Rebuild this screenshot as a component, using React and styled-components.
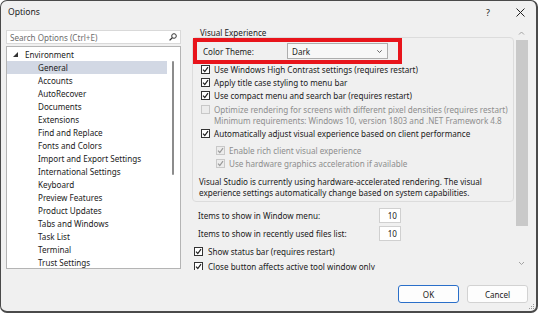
import React from 'react';
import styled, { createGlobalStyle } from 'styled-components';

const GlobalStyle = createGlobalStyle`
  html, body {
    margin: 0;
    padding: 0;
    background: #ffffff;
  }
  body {
    font-family: "Segoe UI", "Noto Sans", sans-serif;
  }
`;

const Window = styled.div`
  position: relative;
  box-sizing: border-box;
  width: 538px;
  height: 313px;
  background: #f0f0f0;
  border: 1px solid #4a4a4a;
  border-right-width: 2px;
  border-bottom-width: 2px;
  border-radius: 7px;
  overflow: hidden;
  display: flex;
  flex-direction: column;
  color: #1b1b1b;
  font-size: 8.1px;
`;

const TitleBar = styled.div`
  height: 26px;
  flex-shrink: 0;
  display: flex;
  align-items: center;
  padding: 0 0 4px 7px;
  box-sizing: border-box;
`;

const Title = styled.div`
  flex: 1;
  font-size: 8.6px;
`;

const TitleButton = styled.div`
  width: 32px;
  height: 20px;
  display: flex;
  align-items: center;
  justify-content: center;
  font-size: 9px;
  color: #222;
`;

const Body = styled.div`
  height: 243px;
  display: flex;
  flex-shrink: 0;
`;

const LeftColumn = styled.div`
  width: 175px;
  margin: 3px 0 0 5px;
  display: flex;
  flex-direction: column;
  gap: 2px;
`;

const SearchBox = styled.div`
  box-sizing: border-box;
  height: 14px;
  background: #fff;
  border: 1px solid #d9d9d9;
  display: flex;
  align-items: center;
  padding: 0 3px 0 3px;
  color: #6e6e6e;
`;

const SearchText = styled.span`
  flex: 1;
`;

const Tree = styled.div`
  box-sizing: border-box;
  height: 223px;
  background: #fff;
  border: 1px solid #b4b4b4;
  display: flex;
  padding-top: 1px;
`;

const TreeList = styled.div`
  width: 160px;
`;

const TreeRow = styled.div`
  height: 13px;
  display: flex;
  align-items: center;
  padding-left: ${p => p.$level === 0 ? 6 : 31}px;
  background: ${p => p.$selected ? '#d2d8e4' : 'transparent'};
  white-space: nowrap;
`;

const Expander = styled.svg`
  width: 5px;
  height: 5px;
  margin-right: 7px;
`;

const TreeScroll = styled.div`
  flex: 1;
  padding: 13px 0 0 5px;
`;

const ThinThumb = styled.div`
  width: 2px;
  height: 114px;
  background: #8c8c8c;
  border-radius: 1px;
`;

const RightPane = styled.div`
  width: 336px;
  margin-left: 11px;
  display: flex;
`;

const Content = styled.div`
  flex: 1;
  overflow: hidden;
`;

const SectionLabel = styled.div`
  height: 10px;
  line-height: 11px;
  padding-left: 8px;
`;

const GroupBox = styled.div`
  width: 322px;
  box-sizing: border-box;
  border: 1px solid #dcdcdc;
  border-radius: 4px;
  padding-bottom: 3px;
`;

const ThemeRow = styled.div`
  box-sizing: border-box;
  width: 209px;
  height: 26px;
  border: 4px solid #e8141b;
  display: flex;
  align-items: center;
  margin-bottom: -1px;
`;

const ThemeLabel = styled.span`
  width: 84px;
  padding-left: 6px;
`;

const Dropdown = styled.div`
  box-sizing: border-box;
  width: 101px;
  height: 16px;
  border: 1px solid #adadad;
  background: #f7f7f7;
  display: flex;
  align-items: center;
  justify-content: space-between;
  padding: 0 5px 0 4px;
`;

const CheckRow = styled.div`
  display: flex;
  align-items: flex-start;
  margin-top: ${p => p.$mt || 0}px;
  padding-left: ${p => p.$indent}px;
  color: ${p => p.$disabled ? '#8e8e8e' : '#1b1b1b'};
  line-height: ${p => p.$lh || 13}px;
  white-space: nowrap;
`;

const Box = styled.span`
  box-sizing: border-box;
  flex-shrink: 0;
  width: 9px;
  height: 9px;
  margin-top: ${p => p.$top}px;
  margin-right: ${p => p.$gap}px;
  border: 1px solid ${p => p.$disabled ? '#c8c8c8' : '#333'};
  background: ${p => p.$disabled ? '#ececec' : '#fff'};
  display: flex;
  align-items: center;
  justify-content: center;
`;

const Note = styled.div`
  margin-top: 6px;
  padding-left: 6px;
  line-height: 11px;
  white-space: nowrap;
`;

const NumberRow = styled.div`
  display: flex;
  align-items: center;
  height: 15px;
  margin-top: ${p => p.$mt}px;
  padding-left: 6px;
`;

const NumberLabel = styled.span`
  width: 181px;
`;

const NumberInput = styled.div`
  box-sizing: border-box;
  width: 22px;
  height: 15px;
  background: #fff;
  border: 1px solid #d0d0d0;
  text-align: right;
  padding-right: 3px;
  line-height: 13px;
`;

const VScroll = styled.div`
  width: 13px;
  display: flex;
  flex-direction: column;
  align-items: center;
  padding-bottom: 1px;
`;

const Arrow = styled.svg`
  width: 7px;
  height: 12px;
  flex-shrink: 0;
`;

const Thumb = styled.div`
  width: 12px;
  height: 186px;
  margin-top: 1px;
  background: #c9c9c9;
`;

const Spacer = styled.div`
  flex: 1;
`;

const Footer = styled.div`
  flex: 1;
  display: flex;
  justify-content: flex-end;
  align-items: flex-start;
  gap: 8px;
  padding: 15px 8px 0 0;
`;

const Button = styled.div`
  box-sizing: border-box;
  width: 61px;
  height: 18px;
  border-radius: 3px;
  background: #fdfdfd;
  border: 1px solid ${p => p.$primary ? '#2a6fc9' : '#d2d2d2'};
  display: flex;
  align-items: center;
  justify-content: center;
`;

const Grip = styled.svg`
  position: absolute;
  right: 1px;
  bottom: 1px;
  width: 7px;
  height: 7px;
`;

const Check = ({ color }) => (
  <svg width="7" height="7" viewBox="0 0 7 7">
    <path d="M1 3.6 L2.8 5.5 L6 1.2" fill="none" stroke={color} strokeWidth="1.2" />
  </svg>
);

const CheckBox = ({ checked = true, disabled, gap = 5, top = 2 }) => (
  <Box $disabled={disabled} $gap={gap} $top={top}>
    {checked && <Check color={disabled ? '#9a9a9a' : '#222'} />}
  </Box>
);

const treeItems = [
  'General', 'Accounts', 'AutoRecover', 'Documents', 'Extensions', 'Find and Replace',
  'Fonts and Colors', 'Import and Export Settings', 'International Settings', 'Keyboard',
  'Preview Features', 'Product Updates', 'Tabs and Windows', 'Task List', 'Terminal', 'Trust Settings',
];

export default function App() {
  return (
    <>
      <GlobalStyle />
      <Window>
        <TitleBar>
          <Title>Options</Title>
          <TitleButton>?</TitleButton>
          <TitleButton>
            <svg width="9" height="9" viewBox="0 0 9 9">
              <path d="M0.5 0.5 L8.5 8.5 M8.5 0.5 L0.5 8.5" stroke="#222" strokeWidth="1" />
            </svg>
          </TitleButton>
        </TitleBar>

        <Body>
          <LeftColumn>
            <SearchBox>
              <SearchText>Search Options (Ctrl+E)</SearchText>
              <svg width="8" height="8" viewBox="0 0 8 8">
                <circle cx="5" cy="3" r="2.3" fill="none" stroke="#333" strokeWidth="1" />
                <path d="M3.3 4.7 L0.6 7.4" stroke="#333" strokeWidth="1.3" />
              </svg>
            </SearchBox>
            <Tree>
              <TreeList>
                <TreeRow $level={0}>
                  <Expander viewBox="0 0 5 5">
                    <polygon points="5,0 5,5 0,5" fill="#333" />
                  </Expander>
                  Environment
                </TreeRow>
                {treeItems.map(item => (
                  <TreeRow key={item} $level={1} $selected={item === 'General'}>
                    {item}
                  </TreeRow>
                ))}
              </TreeList>
              <TreeScroll>
                <ThinThumb />
              </TreeScroll>
            </Tree>
          </LeftColumn>

          <RightPane>
            <Content>
              <SectionLabel>Visual Experience</SectionLabel>
              <GroupBox>
                <ThemeRow>
                  <ThemeLabel>Color Theme:</ThemeLabel>
                  <Dropdown>
                    <span>Dark</span>
                    <svg width="5" height="3" viewBox="0 0 5 3">
                      <path d="M0.3 0.3 L2.5 2.5 L4.7 0.3" fill="none" stroke="#555" strokeWidth="0.9" />
                    </svg>
                  </Dropdown>
                </ThemeRow>
                <CheckRow $indent={8}>
                  <CheckBox gap={4} />
                  Use Windows High Contrast settings (requires restart)
                </CheckRow>
                <CheckRow $indent={8}>
                  <CheckBox gap={4} />
                  Apply title case styling to menu bar
                </CheckRow>
                <CheckRow $indent={8}>
                  <CheckBox gap={4} />
                  Use compact menu and search bar (requires restart)
                </CheckRow>
                <CheckRow $indent={8} $mt={2} $lh={11} $disabled>
                  <CheckBox gap={4} top={1} checked={false} disabled />
                  <div>
                    Optimize rendering for screens with different pixel densities (requires restart)
                    <br />
                    Minimum requirements: Windows 10, version 1803 and .NET Framework 4.8
                  </div>
                </CheckRow>
                <CheckRow $indent={8} $mt={1}>
                  <CheckBox gap={4} />
                  Automatically adjust visual experience based on client performance
                </CheckRow>
                <CheckRow $indent={23} $mt={4} $disabled>
                  <CheckBox gap={4} disabled />
                  Enable rich client visual experience
                </CheckRow>
                <CheckRow $indent={23} $disabled>
                  <CheckBox gap={4} disabled />
                  Use hardware graphics acceleration if available
                </CheckRow>
                <Note>
                  Visual Studio is currently using hardware-accelerated rendering. The visual
                  <br />
                  experience settings automatically change based on system capabilities.
                </Note>
              </GroupBox>
              <NumberRow $mt={6}>
                <NumberLabel>Items to show in Window menu:</NumberLabel>
                <NumberInput>10</NumberInput>
              </NumberRow>
              <NumberRow $mt={3}>
                <NumberLabel>Items to show in recently used files list:</NumberLabel>
                <NumberInput>10</NumberInput>
              </NumberRow>
              <CheckRow $indent={2} $mt={4}>
                <CheckBox gap={5} />
                Show status bar (requires restart)
              </CheckRow>
              <CheckRow $indent={2} $mt={2}>
                <CheckBox gap={5} />
                Close button affects active tool window only
              </CheckRow>
            </Content>
            <VScroll>
              <Arrow viewBox="0 0 7 12">
                <path d="M1 7.5 L3.5 5 L6 7.5" fill="none" stroke="#9a9a9a" strokeWidth="0.9" />
              </Arrow>
              <Thumb />
              <Spacer />
              <Arrow viewBox="0 0 7 12">
                <path d="M1 5 L3.5 7.5 L6 5" fill="none" stroke="#9a9a9a" strokeWidth="0.9" />
              </Arrow>
            </VScroll>
          </RightPane>
        </Body>

        <Footer>
          <Button $primary>OK</Button>
          <Button>Cancel</Button>
        </Footer>

        <Grip viewBox="0 0 7 7">
          <rect x="5" y="1" width="1" height="1" fill="#999" />
          <rect x="3" y="3" width="1" height="1" fill="#999" />
          <rect x="5" y="3" width="1" height="1" fill="#999" />
          <rect x="1" y="5" width="1" height="1" fill="#999" />
          <rect x="3" y="5" width="1" height="1" fill="#999" />
          <rect x="5" y="5" width="1" height="1" fill="#999" />
        </Grip>
      </Window>
    </>
  );
}
